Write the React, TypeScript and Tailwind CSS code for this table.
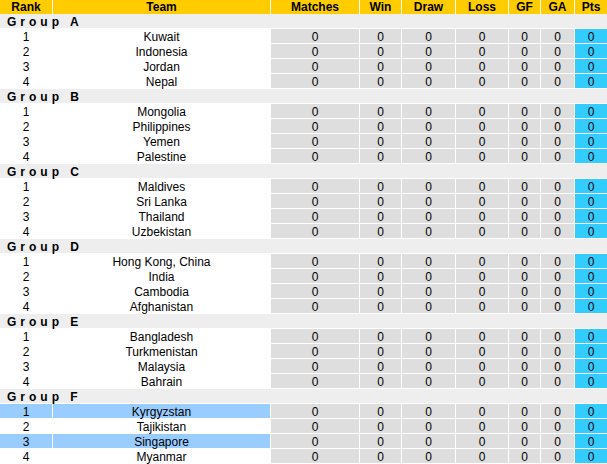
import React from 'react';

type Group = { name: string; teams: string[]; highlight?: number[] };

const groups: Group[] = [
  { name: 'A', teams: ['Kuwait', 'Indonesia', 'Jordan', 'Nepal'] },
  { name: 'B', teams: ['Mongolia', 'Philippines', 'Yemen', 'Palestine'] },
  { name: 'C', teams: ['Maldives', 'Sri Lanka', 'Thailand', 'Uzbekistan'] },
  { name: 'D', teams: ['Hong Kong, China', 'India', 'Cambodia', 'Afghanistan'] },
  { name: 'E', teams: ['Bangladesh', 'Turkmenistan', 'Malaysia', 'Bahrain'] },
  { name: 'F', teams: ['Kyrgyzstan', 'Tajikistan', 'Singapore', 'Myanmar'], highlight: [0, 2] },
];

const headers = ['Rank', 'Team', 'Matches', 'Win', 'Draw', 'Loss', 'GF', 'GA', 'Pts'];

const gridCols = 'grid grid-cols-[53px_218px_89px_42px_54px_53px_32px_34px_32px]';

function App() {
  return (
    <div className="w-[607px] h-[464px] overflow-hidden bg-white text-[12px] text-black font-['Liberation_Sans',Arial,sans-serif]">
      {/* header */}
      <div className={`${gridCols} grid-rows-[14px] h-[14px] bg-[#ffcc00] font-bold leading-[15px]`}>
        {headers.map((h, i) => (
          <div key={h} className={`text-center ${i < 8 ? 'border-r border-white' : ''}`}>
            {h}
          </div>
        ))}
      </div>

      {groups.map((g) => (
        <div key={g.name}>
          <div className="h-[15px] bg-[#eeeeee] border-b border-white pl-[7px] font-bold leading-[16px] tracking-[4px]">
            Group {g.name}
          </div>
          {g.teams.map((team, idx) => {
            const hl = g.highlight?.includes(idx);
            const nameBg = hl ? 'bg-[#99ccff]' : 'bg-white';
            return (
              <div key={team} className={`${gridCols} grid-rows-[15px] h-[15px] leading-[16px]`}>
                <div className={`${nameBg} border-r border-b border-white text-center`}>{idx + 1}</div>
                <div className={`${nameBg} border-r border-b border-white text-center`}>{team}</div>
                {[0, 1, 2, 3, 4, 5].map((c) => (
                  <div key={c} className="bg-[#dedede] border-r border-b border-white text-center">
                    0
                  </div>
                ))}
                <div className="bg-[#33ccff] border-b border-white text-center">0</div>
              </div>
            );
          })}
        </div>
      ))}
    </div>
  );
}

export default App;
